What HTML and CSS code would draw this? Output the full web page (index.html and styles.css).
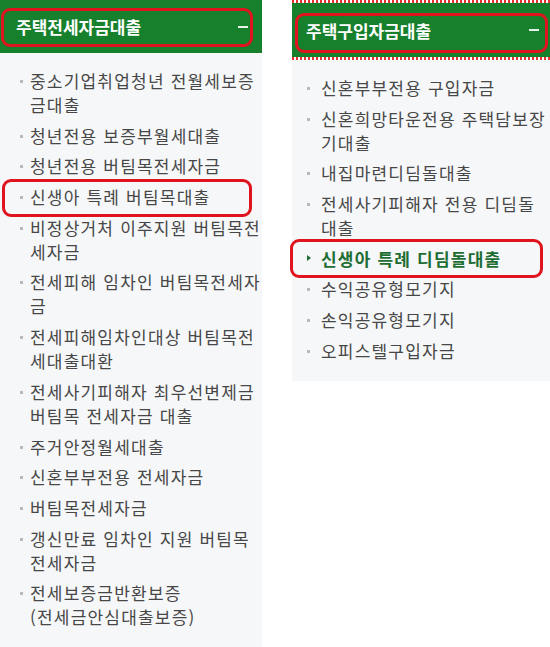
FILE: index.html
```html
<!DOCTYPE html>
<html lang="ko">
<head>
    <meta charset="utf-8">
    <title>대출상품 메뉴</title>
    <link rel="stylesheet" href="styles.css">
</head>
<body>
    <div class="menus">
        <section class="menu">
            <h2 class="menu-head marked"><span>주택전세자금대출</span><span class="minus"></span></h2>
            <ul class="menu-list">
                <li>중소기업취업청년 전월세보증금대출</li>
                <li>청년전용 보증부월세대출</li>
                <li>청년전용 버팀목전세자금</li>
                <li class="marked">신생아 특례 버팀목대출</li>
                <li>비정상거처 이주지원 버팀목전세자금</li>
                <li>전세피해 임차인 버팀목전세자금</li>
                <li>전세피해임차인대상 버팀목전세대출대환</li>
                <li>전세사기피해자 최우선변제금 버팀목 전세자금 대출</li>
                <li>주거안정월세대출</li>
                <li>신혼부부전용 전세자금</li>
                <li>버팀목전세자금</li>
                <li>갱신만료 임차인 지원 버팀목 전세자금</li>
                <li>전세보증금반환보증<br>(전세금안심대출보증)</li>
            </ul>
        </section>

        <section class="menu menu-buy">
            <div class="stripe"></div>
            <h2 class="menu-head marked"><span>주택구입자금대출</span><span class="minus"></span></h2>
            <div class="stripe"></div>
            <ul class="menu-list">
                <li>신혼부부전용 구입자금</li>
                <li>신혼희망타운전용 주택담보장기대출</li>
                <li>내집마련디딤돌대출</li>
                <li>전세사기피해자 전용 디딤돌대출</li>
                <li class="on marked">신생아 특례 디딤돌대출</li>
                <li>수익공유형모기지</li>
                <li>손익공유형모기지</li>
                <li>오피스텔구입자금</li>
            </ul>
        </section>
    </div>
</body>
</html>
```

FILE: styles.css
```css
body { margin: 0; background: #fff; font-family: "Noto Sans CJK KR", "Noto Sans", sans-serif; }

.menus { display: flex; gap: 30px; align-items: flex-start; }
.menu { width: 262px; flex: none; }
.menu-buy { width: 258px; }

.menu-head { position: relative; margin: 0; height: 53px; display: flex; align-items: center; justify-content: space-between; padding: 0 14px 0 16px; background: #17802c; color: #fff; font-size: 17px; font-weight: bold; }
.menu-head .minus { width: 10px; height: 2px; background: #e6f2e8; }
.menu-buy .menu-head { height: 54px; padding: 0 11px 0 14px; }

.stripe { height: 3px; background: repeating-linear-gradient(90deg, #e4302f 0 2px, #fff 2px 4px); }

.menu-list { list-style: none; margin: 0; padding: 16px 0 20px; background: #f6f7f9; display: flex; flex-direction: column; gap: 6.7px; font-size: 17px; line-height: 24px; letter-spacing: 1.2px; color: #474747; }
.menu-list li { position: relative; padding-left: 30px; }
.menu-list li::before { content: ""; position: absolute; left: 20px; top: 11px; width: 3px; height: 3px; background: #b8b8b8; }
.menu-buy .menu-list { padding: 16px 0 18px; }
.menu-buy .menu-list li { padding-left: 29px; }
.menu-buy .menu-list li::before { left: 15px; }

.menu-list li.on { color: #1e6e33; font-weight: bold; }
.menu-buy .menu-list li.on::before { left: 15px; top: 8.5px; width: 0; height: 0; background: none; border-left: 4px solid #1e6e33; border-top: 3.5px solid transparent; border-bottom: 3.5px solid transparent; }

/* red highlight boxes drawn over the items */
.marked::after { content: ""; position: absolute; border: 3px solid #e0141e; border-radius: 9px; pointer-events: none; }
.menu-head.marked::after { left: 1px; right: 9px; top: 8px; bottom: 6px; }
.menu-buy .menu-head.marked::after { left: 3px; right: 2px; top: 10px; bottom: 4px; }
.menu-list li.marked::after { left: 2px; right: 10px; top: -6px; bottom: -8px; }
.menu-buy .menu-list li.marked::after { left: -2px; right: 7px; top: -8px; bottom: -7px; }
```
